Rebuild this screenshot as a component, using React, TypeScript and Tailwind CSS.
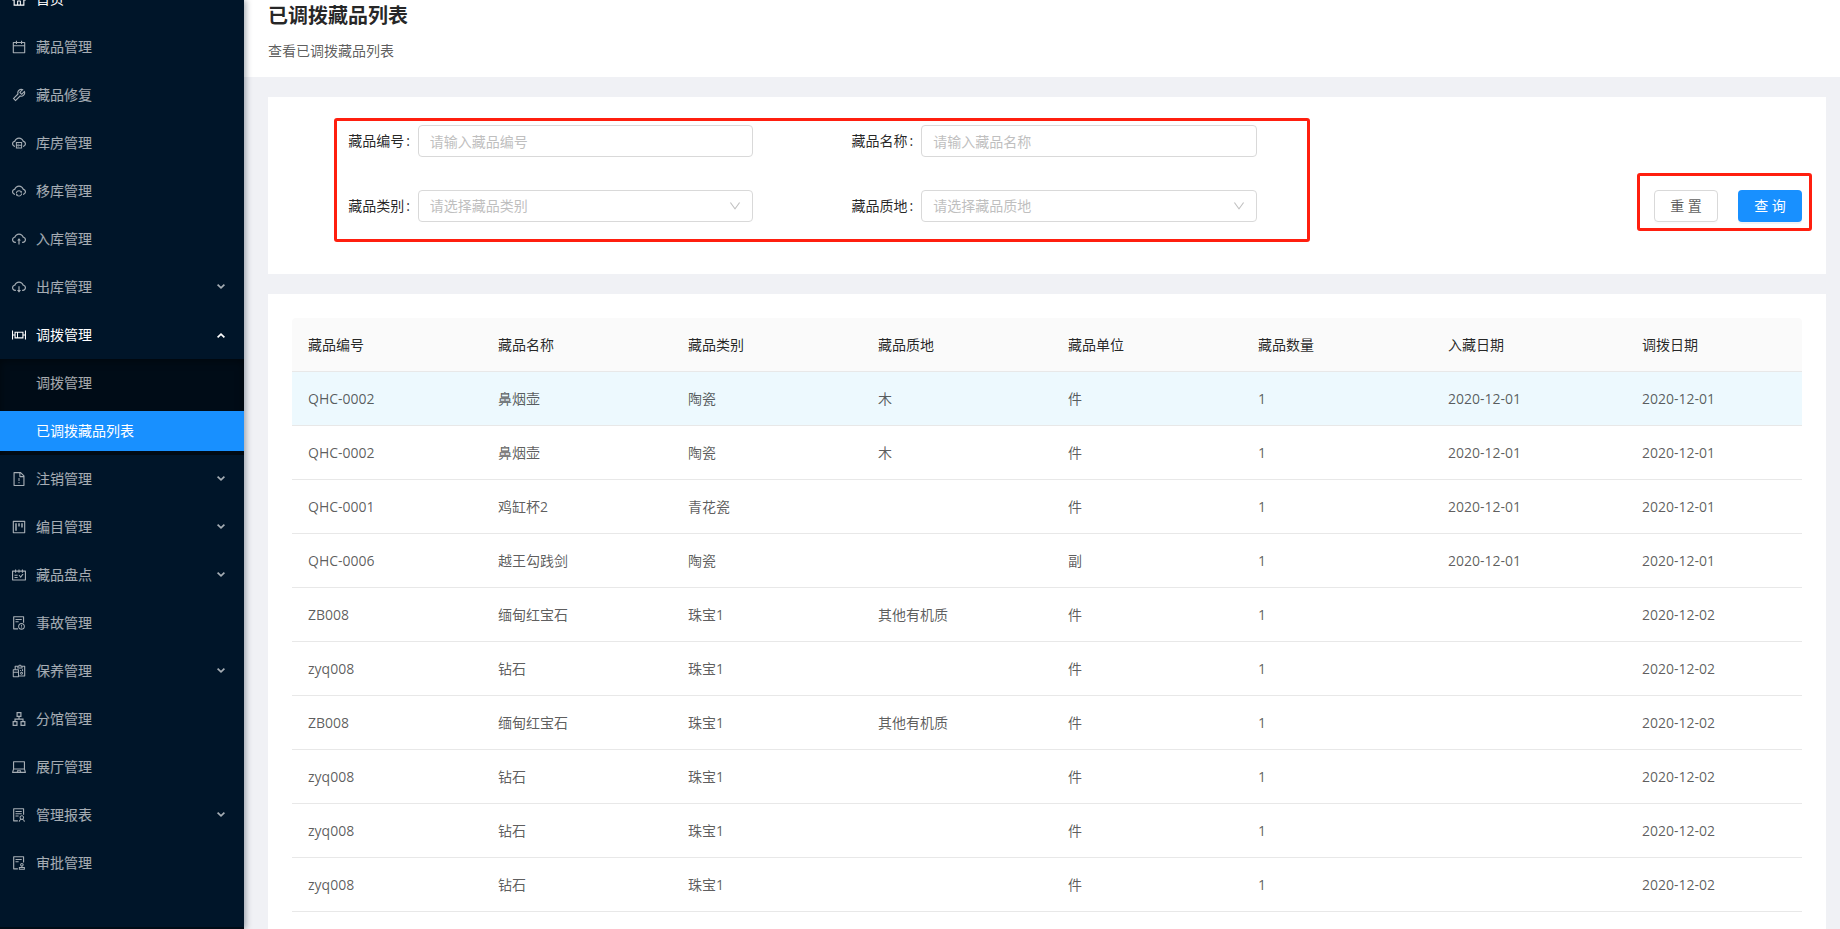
import { useState } from 'react';
import type { IconType } from 'react-icons';
import {
  AiOutlineApartment,
  AiOutlineAudit,
  AiOutlineBoxPlot,
  AiOutlineCalendar,
  AiOutlineCloudDownload,
  AiOutlineCloudServer,
  AiOutlineCloudSync,
  AiOutlineCloudUpload,
  AiOutlineDown,
  AiOutlineException,
  AiOutlineFileExclamation,
  AiOutlineHome,
  AiOutlineLaptop,
  AiOutlineProject,
  AiOutlineReconciliation,
  AiOutlineSchedule,
  AiOutlineSolution,
  AiOutlineTool,
} from 'react-icons/ai';

type NavItem = { label: string; icon: IconType; group?: boolean; children?: string[] };

const navItems: NavItem[] = [
  { label: '首页', icon: AiOutlineHome },
  { label: '藏品管理', icon: AiOutlineCalendar },
  { label: '藏品修复', icon: AiOutlineTool },
  { label: '库房管理', icon: AiOutlineCloudServer },
  { label: '移库管理', icon: AiOutlineCloudSync },
  { label: '入库管理', icon: AiOutlineCloudUpload },
  { label: '出库管理', icon: AiOutlineCloudDownload, group: true },
  { label: '调拨管理', icon: AiOutlineBoxPlot, group: true, children: ['调拨管理', '已调拨藏品列表'] },
  { label: '注销管理', icon: AiOutlineFileExclamation, group: true },
  { label: '编目管理', icon: AiOutlineProject, group: true },
  { label: '藏品盘点', icon: AiOutlineSchedule, group: true },
  { label: '事故管理', icon: AiOutlineException },
  { label: '保养管理', icon: AiOutlineReconciliation, group: true },
  { label: '分馆管理', icon: AiOutlineApartment },
  { label: '展厅管理', icon: AiOutlineLaptop },
  { label: '管理报表', icon: AiOutlineSolution, group: true },
  { label: '审批管理', icon: AiOutlineAudit },
];

const columns = ['藏品编号', '藏品名称', '藏品类别', '藏品质地', '藏品单位', '藏品数量', '入藏日期', '调拨日期'];

const rows = [
  ['QHC-0002', '鼻烟壶', '陶瓷', '木', '件', '1', '2020-12-01', '2020-12-01'],
  ['QHC-0002', '鼻烟壶', '陶瓷', '木', '件', '1', '2020-12-01', '2020-12-01'],
  ['QHC-0001', '鸡缸杯2', '青花瓷', '', '件', '1', '2020-12-01', '2020-12-01'],
  ['QHC-0006', '越王勾践剑', '陶瓷', '', '副', '1', '2020-12-01', '2020-12-01'],
  ['ZB008', '缅甸红宝石', '珠宝1', '其他有机质', '件', '1', '', '2020-12-02'],
  ['zyq008', '钻石', '珠宝1', '', '件', '1', '', '2020-12-02'],
  ['ZB008', '缅甸红宝石', '珠宝1', '其他有机质', '件', '1', '', '2020-12-02'],
  ['zyq008', '钻石', '珠宝1', '', '件', '1', '', '2020-12-02'],
  ['zyq008', '钻石', '珠宝1', '', '件', '1', '', '2020-12-02'],
  ['zyq008', '钻石', '珠宝1', '', '件', '1', '', '2020-12-02'],
];

// the glyphs leave a 64 unit margin, crop it so they fill the 14px box
const iconBox = '64 64 896 896';

function Arrow({ open }: { open: boolean }) {
  return (
    <svg viewBox="0 0 8 6" className={`ml-auto w-2 h-1.5 ${open ? 'rotate-180' : ''}`} fill="none">
      <path d="M0.6 0.7 L4 3.9 L7.4 0.7" stroke="currentColor" strokeWidth="1.7" />
    </svg>
  );
}

function Sidebar() {
  const [open, setOpen] = useState('调拨管理');

  return (
    <aside className="relative z-10 w-[244px] shrink-0 overflow-y-clip bg-[#001529] border-b-2 border-[#000c17] shadow-[2px_0_6px_rgba(0,21,41,0.35)]">
      <nav className="-mt-[25px] text-white/65">
        {navItems.map(({ label, icon: Icon, group, children }) => {
          const isOpen = open === label;
          const row = `flex h-12 w-full items-center gap-2.5 pl-3 pr-[19px] ${isOpen ? 'text-white' : 'hover:text-white'}`;
          if (!group) {
            return (
              <a key={label} href="#" className={row}>
                <Icon size={14} viewBox={iconBox} />
                {label}
              </a>
            );
          }
          return (
            <div key={label}>
              <button type="button" className={row} onClick={() => setOpen(isOpen ? '' : label)}>
                <Icon size={14} viewBox={iconBox} />
                {label}
                <Arrow open={isOpen} />
              </button>
              {isOpen && children && (
                <div className="flow-root bg-[#000c17] shadow-[inset_0_2px_8px_rgba(0,0,0,0.45)]">
                  {children.map((child, i) => (
                    <a
                      key={child}
                      href="#"
                      className={`my-1 flex h-10 items-center pl-9 ${i === 0 ? 'mb-2' : 'bg-[#1890ff] text-white'}`}
                    >
                      {child}
                    </a>
                  ))}
                </div>
              )}
            </div>
          );
        })}
      </nav>
    </aside>
  );
}

const control =
  'h-8 w-full rounded border border-[#d9d9d9] bg-white px-[11px] text-sm outline-none placeholder:text-[#bfbfbf] focus:border-[#40a9ff]';

function Field({ id, label, children }: { id: string; label: string; children: React.ReactNode }) {
  return (
    <div className="flex h-10 items-center">
      <label htmlFor={id} className="w-1/4 shrink-0 pr-2 text-right text-black/85">
        {label}
        <span className="ml-0.5">:</span>
      </label>
      <div className="relative w-2/3">{children}</div>
    </div>
  );
}

function SelectField({ id, label, placeholder }: { id: string; label: string; placeholder: string }) {
  return (
    <Field id={id} label={label}>
      <select id={id} className={`${control} appearance-none text-[#bfbfbf]`}>
        <option>{placeholder}</option>
      </select>
      <AiOutlineDown
        size={12}
        viewBox={iconBox}
        className="pointer-events-none absolute right-3 top-2.5 text-black/25"
      />
    </Field>
  );
}

export default function App() {
  return (
    <div className="flex min-h-screen bg-[#f0f1f5] font-['Open_Sans','Noto_Sans_CJK_SC',sans-serif] text-sm text-black/65">
      <Sidebar />

      <div className="flex min-w-0 flex-1 flex-col">
        <header className="bg-white pb-4 pl-6">
          <h1 className="text-xl leading-8 font-bold text-black/85">已调拨藏品列表</h1>
          <p className="mt-2 leading-[21px]">查看已调拨藏品列表</p>
        </header>

        <main className="flex flex-1 flex-col gap-5 pt-5 pl-6 pr-3.5">
          {/* Search form */}
          <form className="grid grid-cols-3 bg-white px-6 pt-6 pb-12" onSubmit={(e) => e.preventDefault()}>
            <div className="relative col-span-2 grid grid-cols-2 gap-y-[25px]">
              <Field id="code" label="藏品编号">
                <input id="code" className={control} placeholder="请输入藏品编号" />
              </Field>
              <Field id="name" label="藏品名称">
                <input id="name" className={control} placeholder="请输入藏品名称" />
              </Field>
              <SelectField id="category" label="藏品类别" placeholder="请选择藏品类别" />
              <SelectField id="texture" label="藏品质地" placeholder="请选择藏品质地" />
              <div className="pointer-events-none absolute left-[42px] -right-[11px] -top-[3px] -bottom-4 rounded-[3px] border-3 border-[#ff1f0f]" />
            </div>
            <div className="flex items-end justify-end pb-1">
              <div className="relative flex gap-5">
                <button type="reset" className="h-8 w-16 rounded border border-[#d9d9d9] bg-white shadow-[0_2px_0_rgba(0,0,0,0.015)]">
                  重 置
                </button>
                <button type="submit" className="h-8 w-16 rounded bg-[#1890ff] text-white shadow-[0_2px_0_rgba(0,0,0,0.045)]">
                  查 询
                </button>
                <div className="pointer-events-none absolute -left-[17px] -right-2.5 -top-[17px] -bottom-[9px] rounded-[3px] border-3 border-[#ff1f0f]" />
              </div>
            </div>
          </form>

          {/* Result table */}
          <section className="flex-1 bg-white px-6 pt-6">
            <table className="w-full table-fixed border-separate border-spacing-0 text-left">
              <colgroup>
                <col span={6} className="w-[190px]" />
                <col className="w-[194px]" />
                <col className="w-[176px]" />
              </colgroup>
              <thead>
                <tr>
                  {columns.map((c) => (
                    <th
                      key={c}
                      className="h-[54px] border-b border-[#e8e8e8] bg-[#fafafa] px-4 font-normal text-black/85 first:rounded-tl last:rounded-tr"
                    >
                      {c}
                    </th>
                  ))}
                </tr>
              </thead>
              <tbody>
                {rows.map((row, i) => (
                  <tr key={i} className={i === 0 ? 'bg-[#edf9fe]' : ''}>
                    {row.map((cell, j) => (
                      <td key={j} className="h-[54px] border-b border-[#e8e8e8] px-4">
                        {cell}
                      </td>
                    ))}
                  </tr>
                ))}
              </tbody>
            </table>
          </section>
        </main>
      </div>
    </div>
  );
}
